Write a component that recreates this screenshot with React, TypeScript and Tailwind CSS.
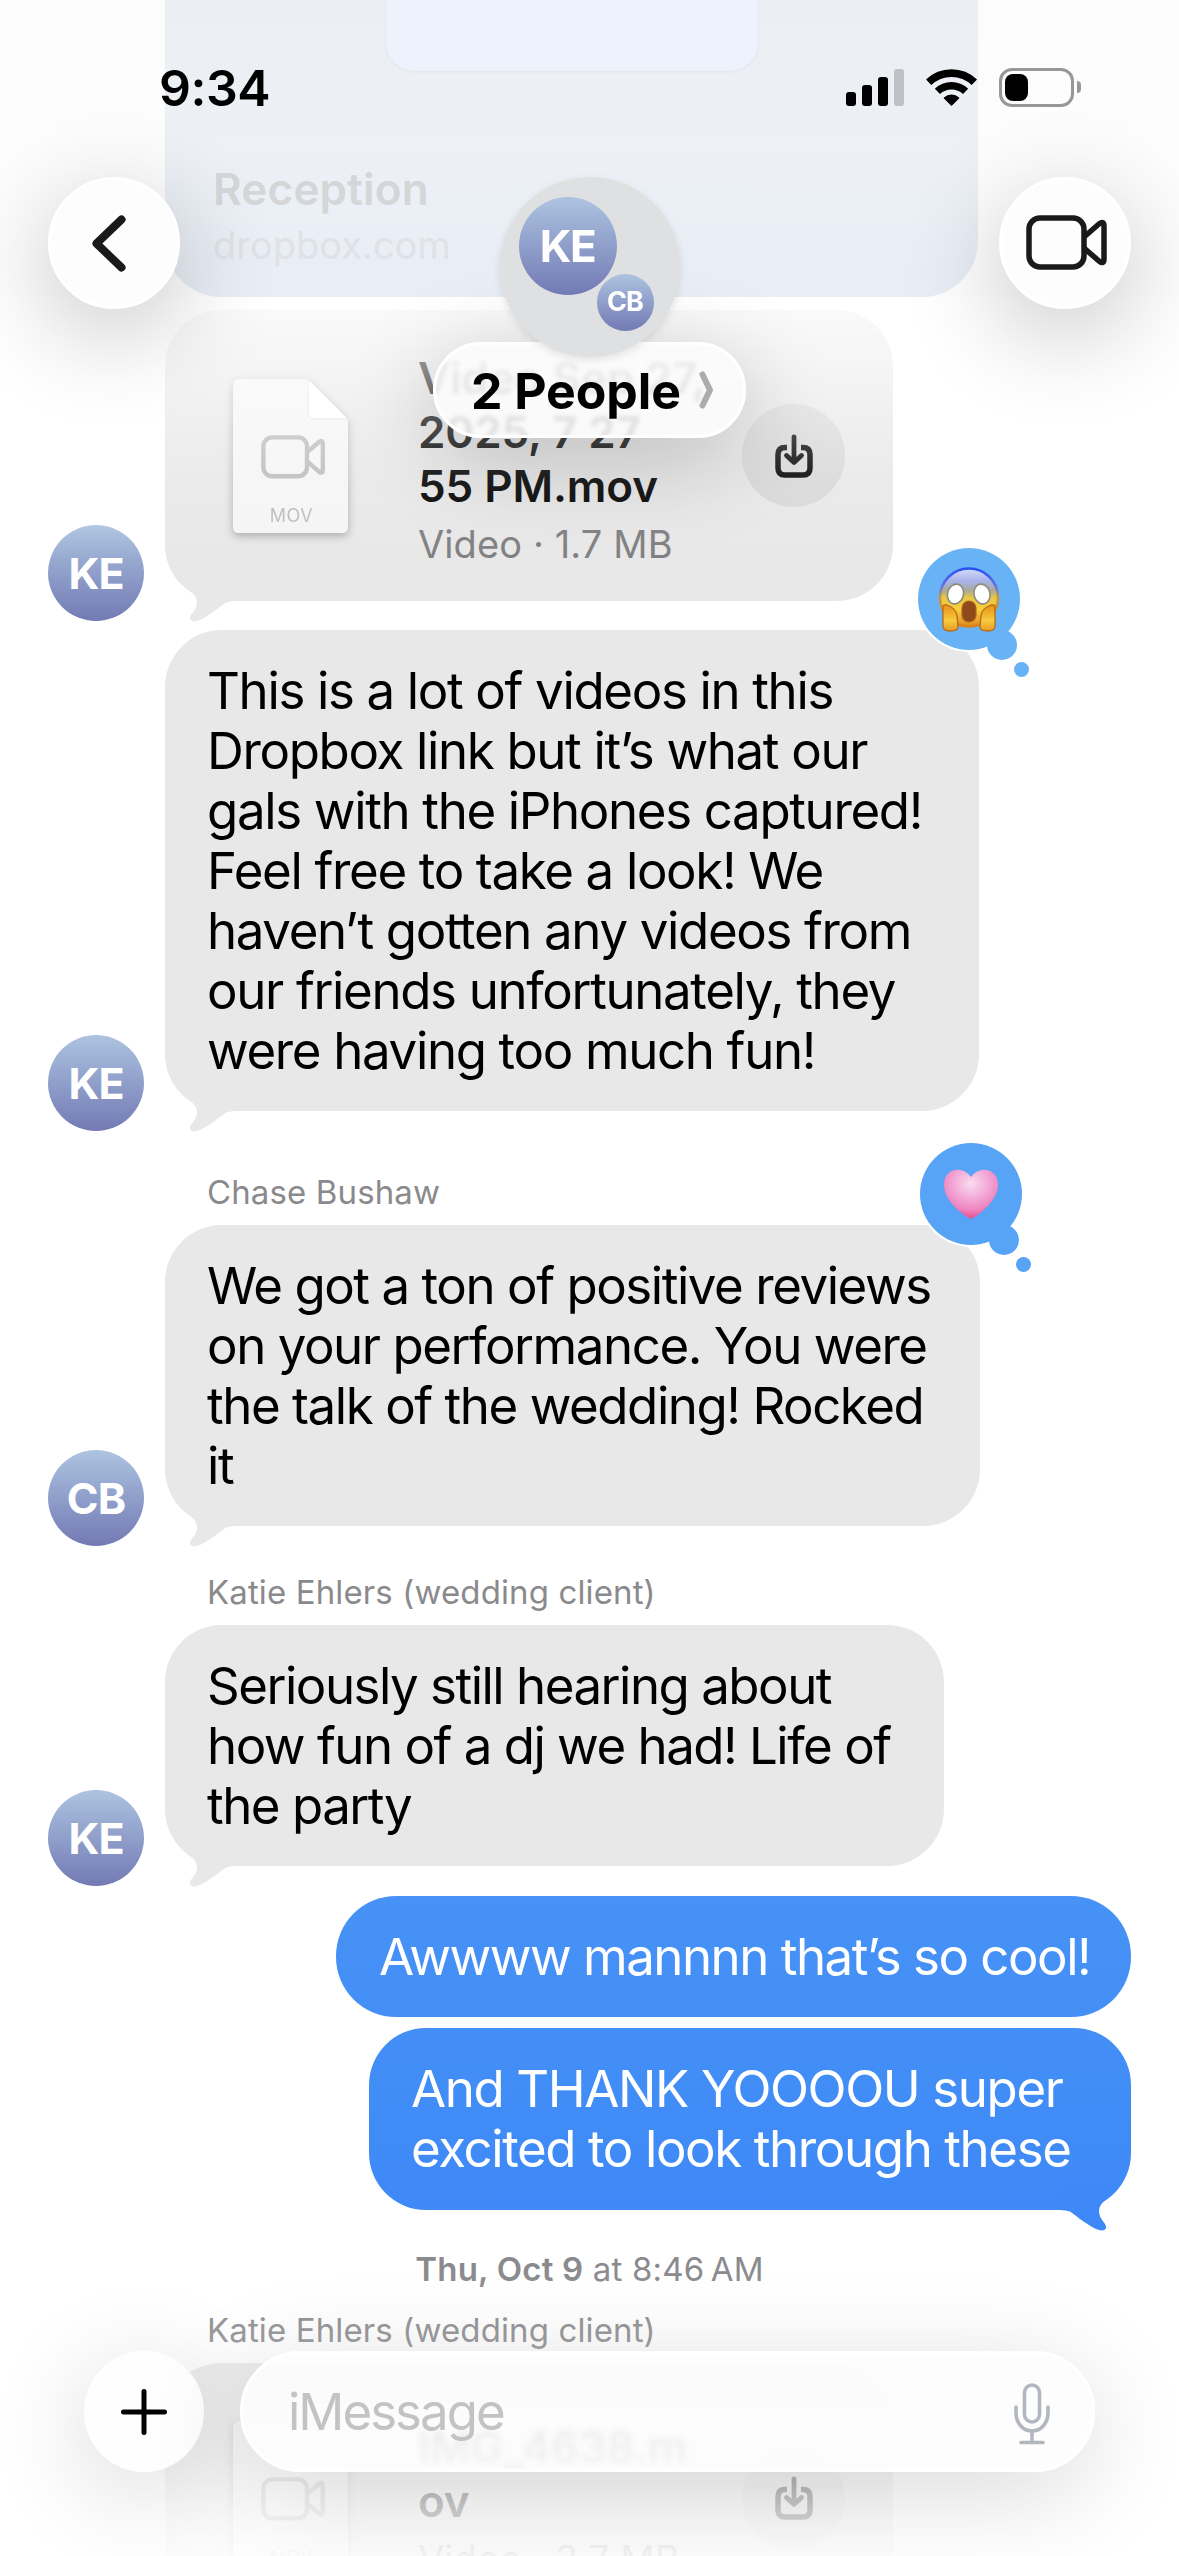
import type { ReactNode } from "react";
import clsx from "clsx";

const font = "font-['Inter',sans-serif]";

function Avatar({ initials }: { initials: string }) {
  return (
    <div className="w-24 h-24 shrink-0 rounded-full bg-gradient-to-b from-[#adc4e0] to-[#737ab4] flex items-center justify-center text-white text-[43px] font-bold tracking-[-1px]">
      {initials}
    </div>
  );
}

function Tail({ className }: { className?: string }) {
  return (
    <svg className={clsx("absolute top-full -mt-[31px]", className)} width="75" height="52" viewBox="0 0 75 52" fill="currentColor">
      <path d="M13 10C21 18 32 23 32 32C32 41 24 44 25 49C26 52 30 52 35 50C47 44 57 35 61 32.500Q65 31 71 31V0H20Z" />
    </svg>
  );
}

function VideoIcon({ className, width, stroke }: { className?: string; width: number; stroke: number }) {
  return (
    <svg className={className} width={width} height={(width * 56) / 82} viewBox="0 0 82 56" fill="none" stroke="currentColor" strokeWidth={stroke} strokeLinejoin="round">
      <rect x="3" y="3" width="55" height="49" rx="11" />
      <path d="M58 22L73.500 8.500Q78 5.500 78 11V44Q78 49.500 73.500 46.500L58 33" />
    </svg>
  );
}

function DownloadIcon() {
  return (
    <svg width="38" height="44" viewBox="0 0 38 44" fill="none" stroke="currentColor" strokeLinecap="round" strokeLinejoin="round">
      <path d="M12 13.500H10Q3 13.500 3 20.500V34Q3 41 10 41H28Q35 41 35 34V20.500Q35 13.500 28 13.500H26" strokeWidth="5.500" strokeLinecap="butt" />
      <path d="M19 3V28M11.500 21.500L19 28.500L26.500 21.500" strokeWidth="4.800" />
    </svg>
  );
}

function DocIcon() {
  return (
    <div className="relative w-[115px] h-[154px] drop-shadow-[0_3px_4px_rgba(0,0,0,0.28)] text-[#bcbcbc] flex flex-col items-center">
      <svg className="absolute inset-0" width="115" height="154" viewBox="0 0 115 154">
        <path d="M6 0H75L115 40V148Q115 154 109 154H6Q0 154 0 148V6Q0 0 6 0Z" fill="#f5f5f5" />
        <path d="M75 0L115 40H81Q75 40 75 34Z" fill="#fff" stroke="#dedede" strokeWidth="1" />
      </svg>
      <VideoIcon className="relative mt-[56px] ml-1.5" width={65} stroke={5.5} />
      <span className="relative mt-[25px] ml-0.5 text-[18px] leading-6 tracking-[0.5px]">MOV</span>
    </div>
  );
}

function FileBubble({ lines, size, className }: { lines: string; size: string; className?: string }) {
  return (
    <div className={clsx("w-[728px] bg-[#e8e8e8] rounded-[56px] flex items-center pl-[68px] pr-[48px]", className)}>
      <DocIcon />
      <div className="ml-[70px] mt-[9px] flex-1 whitespace-pre">
        <p className="text-[44px] leading-[54px] font-semibold text-black tracking-[-0.1px]">{lines}</p>
        <p className="mt-[5px] text-[38px] leading-[52px] text-[#808082] tracking-[0.1px]">{size}</p>
      </div>
      <div className="w-[103px] h-[103px] rounded-full bg-[#d8d8d8] flex items-center justify-center text-black">
        <DownloadIcon />
      </div>
    </div>
  );
}

function Reaction({ className, children }: { className: string; children: ReactNode }) {
  return (
    <div className={clsx("absolute w-[102px] h-[102px]", className)}>
      <svg className="absolute -inset-1 overflow-visible" width="110" height="110" viewBox="-4 -4 110 110" fill="currentColor">
        <circle cx="51" cy="51" r="53" fill="#fff" />
        <circle cx="51" cy="51" r="51" />
        <circle cx="84" cy="97" r="15" />
        <circle cx="103.500" cy="121.500" r="7.500" />
      </svg>
      <div className="relative w-full h-full flex items-center justify-center">{children}</div>
    </div>
  );
}

function ScreamFace() {
  return (
    <svg width="62" height="66" viewBox="0 0 62 66">
      <defs>
        <linearGradient id="face" x1="0" y1="0" x2="0" y2="1">
          <stop offset="0" stopColor="#d5dcfb" />
          <stop offset="0.22" stopColor="#a7b2ea" />
          <stop offset="0.38" stopColor="#a9a99a" />
          <stop offset="0.5" stopColor="#e6c748" />
          <stop offset="0.7" stopColor="#f8cf3c" />
          <stop offset="1" stopColor="#e08a20" />
        </linearGradient>
        <linearGradient id="rim" x1="0" y1="0" x2="0" y2="1">
          <stop offset="0" stopColor="#2b50f0" />
          <stop offset="0.3" stopColor="#5f74e6" />
          <stop offset="0.5" stopColor="#c79a3a" />
          <stop offset="1" stopColor="#d9821c" />
        </linearGradient>
        <linearGradient id="hand" x1="0" y1="0" x2="0" y2="1">
          <stop offset="0" stopColor="#e88f1a" />
          <stop offset="0.6" stopColor="#f6cb3e" />
          <stop offset="1" stopColor="#e79a24" />
        </linearGradient>
      </defs>
      <circle cx="31" cy="31.500" r="29" fill="url(#face)" stroke="url(#rim)" strokeWidth="2.500" />
      <ellipse cx="17.500" cy="28" rx="8" ry="10" transform="rotate(14 17.500 28)" fill="#fff" stroke="#8d8a7c" strokeWidth="1.600" />
      <ellipse cx="44" cy="28" rx="8" ry="10" transform="rotate(-14 44 28)" fill="#fff" stroke="#8d8a7c" strokeWidth="1.600" />
      <rect x="24" y="35" width="14" height="21" rx="7" fill="#8f4a1c" stroke="#b4641c" strokeWidth="1.200" />
      <g fill="url(#hand)" stroke="#b86b15" strokeWidth="1.300">
        <path d="M5 42Q4 38 9 39Q18 42 19 50L20 61Q20 65 12 65Q5 65 5 60Z" />
        <path d="M57 42Q58 38 53 39Q44 42 43 50L42 61Q42 65 50 65Q57 65 57 60Z" />
      </g>
    </svg>
  );
}

function PinkHeart() {
  return (
    <svg width="56" height="50" viewBox="0 0 56 50">
      <defs>
        <radialGradient id="heart" cx="0.500" cy="0.280" r="0.720">
          <stop offset="0" stopColor="#fadcee" />
          <stop offset="0.4" stopColor="#f3aedb" />
          <stop offset="0.75" stopColor="#ee86bf" />
          <stop offset="1" stopColor="#ea4f92" />
        </radialGradient>
      </defs>
      <path d="M28 8C24 3 19 0.500 14 0.800C6 1.300 0.800 7.500 1 16C1.300 30 15 42 25 48.500Q28 50.300 31 48.500C41 42 54.700 30 55 16C55.200 7.500 50 1.300 42 0.800C37 0.500 32 3 28 8Z" fill="url(#heart)" />
    </svg>
  );
}

function Incoming({ initials, children }: { initials: string; children: ReactNode }) {
  return (
    <div className="flex items-end gap-[21px] pl-12">
      <Avatar initials={initials} />
      <div className="relative mb-5 text-[#e8e8e8]">
        {children}
        <Tail className="left-0" />
      </div>
    </div>
  );
}

function Sender({ name, className }: { name: string; className: string }) {
  return (
    <div className={clsx("pl-[207px] pb-[13px] text-[33px] leading-10 text-[#8a8a8d] tracking-[0.12px]", className)}>{name}</div>
  );
}

const textBubble = "rounded-[57px] text-[51px] leading-[60px] whitespace-pre pt-[31px]";

export default function App() {
  return (
    <div className={clsx("relative w-[1179px] h-[2556px] overflow-hidden bg-white text-black", font)}>
      {/* Conversation */}
      <main className="flex flex-col">
        {/* Link preview card */}
        <div className="bg-gradient-to-b from-[#fcfcfc] to-[#fefefe]">
          <div className="ml-[165px] w-[813px] h-[297px] rounded-b-[56px] bg-gradient-to-b from-[#ebeff4] via-[#edf1f6] to-[#e8edf6]">
            <div className="mx-auto w-[372px] h-[71px] rounded-b-[28px] bg-[#edf2fc] shadow-[0_1px_3px_rgba(0,0,0,0.05)]" />
            <div className="pl-12 pt-[89px]">
              <p className="text-[44px] leading-[58px] font-semibold text-[#d5d6d7] tracking-[0.2px]">Reception</p>
              <p className="text-[38px] leading-[54px] text-[#e0e2e6]">dropbox.com</p>
            </div>
          </div>
        </div>

        <div className="mt-[13px]">
          <Incoming initials="KE">
            <FileBubble className="h-[291px]" lines={"Video Sep 27,\n2025, 7 27\n55 PM.mov"} size="Video · 1.7 MB" />
          </Incoming>
        </div>

        <div className="mt-[9px]">
          <Incoming initials="KE">
            <div className={clsx(textBubble, "w-[814px] h-[481px] pl-[42px] bg-[#e8e8e8] text-black tracking-[-1.35px]")}>
              {"This is a lot of videos in this\nDropbox link but it’s what our\ngals with the iPhones captured!\nFeel free to take a look! We\nhaven’t gotten any videos from\nour friends unfortunately, they\nwere having too much fun!"}
            </div>
            <Reaction className="-right-[41px] -top-[82px] text-[#68b3f5]">
              <ScreamFace />
            </Reaction>
          </Incoming>
        </div>

        <Sender name="Chase Bushaw" className="pt-[41px]" />
        <Incoming initials="CB">
          <div className={clsx(textBubble, "w-[815px] h-[301px] pl-[42px] bg-[#e8e8e8] text-black tracking-[-1.45px]")}>
            {"We got a ton of positive reviews\non your performance. You were\nthe talk of the wedding! Rocked\nit"}
          </div>
          <Reaction className="-right-[42px] -top-[82px] text-[#57a3f5]">
            <PinkHeart />
          </Reaction>
        </Incoming>

        <Sender name="Katie Ehlers (wedding client)" className="pt-[26px]" />
        <Incoming initials="KE">
          <div className={clsx(textBubble, "w-[779px] h-[241px] pl-[42px] bg-[#e8e8e8] text-black tracking-[-1.5px]")}>
            {"Seriously still hearing about\nhow fun of a dj we had! Life of\nthe party"}
          </div>
        </Incoming>

        {/* Outgoing */}
        <div className="mt-2.5 pr-12 flex flex-col items-end gap-[11px] text-white">
          <div className={clsx(textBubble, "w-[795px] h-[121px] rounded-[60px] pl-[43px] tracking-[-1.5px] bg-gradient-to-b from-[#4792f6] to-[#438ff6]")}>
            Awwww mannnn that’s so cool!
          </div>
          <div className="relative">
            <div className={clsx(textBubble, "w-[762px] h-[182px] pt-8 pl-[42px] tracking-[-1.4px] bg-gradient-to-b from-[#438ff6] to-[#3e89f7]")}>
              {"And THANK YOOOOU super\nexcited to look through these"}
            </div>
            <Tail className="right-0 -scale-x-100 text-[#3e89f7]" />
          </div>
        </div>

        <p className="mt-[39px] text-center text-[33px] leading-10 text-[#8a8a8e] tracking-[0.2px]">
          <span className="font-semibold">Thu, Oct 9</span> at 8:46{"\u2009"}AM
        </p>
        <Sender name="Katie Ehlers (wedding client)" className="pt-[21px]" />
        <div className="pl-[165px]">
          <FileBubble className="h-[270px]" lines={"IMG_4638.m\nov"} size="Video · 3.7 MB" />
        </div>
      </main>

      {/* Header */}
      <header className="absolute inset-x-0 top-0 h-[560px]">
        <div className="absolute inset-x-0 top-[298px] bottom-0 bg-[linear-gradient(to_bottom,rgba(255,255,255,0.8)_0px,rgba(255,255,255,0.58)_65px,rgba(255,255,255,0.3)_130px,rgba(255,255,255,0.12)_180px,rgba(255,255,255,0)_262px)]" />

        {/* Status bar */}
        <div className="relative h-[177px] pl-[159px] pr-[98px] pt-[68px] flex items-start justify-between">
          <span className="text-[50px] leading-[40px] font-semibold tracking-[-0.5px]">9:34</span>
          <div className="flex items-start">
            <div className="mt-[1px] h-[37px] flex items-end gap-1.5">
              <span className="w-2.5 h-[14px] rounded-[3px] bg-black" />
              <span className="w-2.5 h-[21px] rounded-[3px] bg-black" />
              <span className="w-2.5 h-[29px] rounded-[3px] bg-black" />
              <span className="w-2.5 h-[37px] rounded-[3px] bg-[#bfc0c4]" />
            </div>
            <svg className="mt-[1px] ml-[22px]" width="51" height="37" viewBox="0 0 51 37" fill="none" stroke="#000">
              <path d="M2.600 13.300A33 33 0 0 1 48.400 13.300" strokeWidth="7.800" />
              <path d="M11.400 22.400A20.300 20.300 0 0 1 39.600 22.400" strokeWidth="7.400" />
              <path d="M25.500 36L18.500 29A10 10 0 0 1 32.500 29Z" fill="#000" strokeWidth="1.500" strokeLinejoin="round" />
            </svg>
            <div className="ml-[22px] w-[75px] h-[39px] rounded-[13px] border-[3px] border-[#979797] p-[3px]">
              <div className="w-[23px] h-[27px] rounded-[8px] bg-black" />
            </div>
            <span className="ml-[3px] mt-[13px] w-1 h-3 rounded-r-full bg-[#979797]" />
          </div>
        </div>

        <div className="relative flex justify-between px-12">
          <button className="w-[132px] h-[132px] rounded-full bg-[#fdfdfd] border-[3px] border-white shadow-[0_24px_100px_rgba(0,0,0,0.24)] flex items-center justify-center">
            <svg className="-ml-2.5" width="34" height="57" viewBox="0 0 34 57" fill="none" stroke="#1a1a1a" strokeWidth="8" strokeLinecap="round" strokeLinejoin="round">
              <path d="M29.500 4.500L4.500 28.500L29.500 52.500" />
            </svg>
          </button>

          <div className="flex flex-col items-center">
            <div className="relative z-10 w-[180px] h-[180px] rounded-full bg-[#dee0e1] shadow-[0_3px_8px_rgba(0,0,0,0.1)]">
              <div className="absolute left-[19px] top-5 w-[98px] h-[98px] rounded-full bg-gradient-to-b from-[#adc4e0] to-[#737ab4] flex items-center justify-center text-white text-[44px] font-bold tracking-[-1.5px]">
                KE
              </div>
              <div className="absolute left-[97px] top-[97px] w-[57px] h-[57px] rounded-full bg-gradient-to-b from-[#adc4e0] to-[#737ab4] flex items-center justify-center text-white text-[27px] font-bold tracking-[-1px]">
                CB
              </div>
            </div>
            <div className="-mt-[15px] w-[313px] h-24 rounded-full bg-[#fbfbfb]/[0.84] backdrop-blur-[2px] border-[3px] border-white shadow-[0_20px_90px_rgba(0,0,0,0.22)] flex items-center pl-[35px]">
              <span className="pt-0.5 text-[50px] leading-[60px] font-bold tracking-[-0.1px]">2 People</span>
              <svg className="ml-[18px]" width="15" height="38" viewBox="0 0 15 38" fill="none" stroke="#acacac" strokeWidth="6" strokeLinecap="round" strokeLinejoin="round">
                <path d="M3.500 3.500L11 19L3.500 34.500" />
              </svg>
            </div>
          </div>

          <button className="w-[132px] h-[132px] rounded-full bg-[#fdfdfd] border-[3px] border-white shadow-[0_24px_100px_rgba(0,0,0,0.24)] flex items-center justify-center text-[#1a1a1a]">
            <VideoIcon className="ml-1" width={82} stroke={5.5} />
          </button>
        </div>
      </header>

      {/* Composer */}
      <footer className="absolute inset-x-0 bottom-0 h-[290px]">
        <div className="absolute inset-0 bg-[linear-gradient(to_bottom,rgba(255,255,255,0)_0px,rgba(255,255,255,0.15)_70px,rgba(255,255,255,0.45)_134px,rgba(255,255,255,0.8)_244px,rgba(255,255,255,0.9)_290px)]" />
        <div className="relative pt-[85px] pl-[84px] flex gap-9">
          <button className="w-[120px] h-[121px] rounded-full bg-[#fefefe] shadow-[0_20px_100px_rgba(0,0,0,0.16)] flex items-center justify-center">
            <svg width="46" height="46" viewBox="0 0 46 46" stroke="#000" strokeWidth="5" strokeLinecap="round">
              <path d="M23 2.500V43.500M2.500 23H43.500" />
            </svg>
          </button>
          <div className="w-[855px] h-[121px] rounded-full bg-[#fdfdfd]/[0.86] backdrop-blur-[3px] border-[3px] border-white shadow-[0_20px_100px_rgba(0,0,0,0.15)] flex items-center justify-between pl-[45px] pr-[42px]">
            <span className="text-[51px] leading-[60px] text-[#c3c3c5] tracking-[-2px]">iMessage</span>
            <svg className="mt-1" width="36" height="62" viewBox="0 0 36 62" fill="none" stroke="#b2b6be" strokeWidth="3.600" strokeLinecap="round">
              <rect x="10.500" y="2" width="15" height="37" rx="7.500" />
              <path d="M2 24V30C2 40 9 48 18 48C27 48 34 40 34 30V24M18 48V59M7 59.500H29" />
            </svg>
          </div>
        </div>
      </footer>
    </div>
  );
}
